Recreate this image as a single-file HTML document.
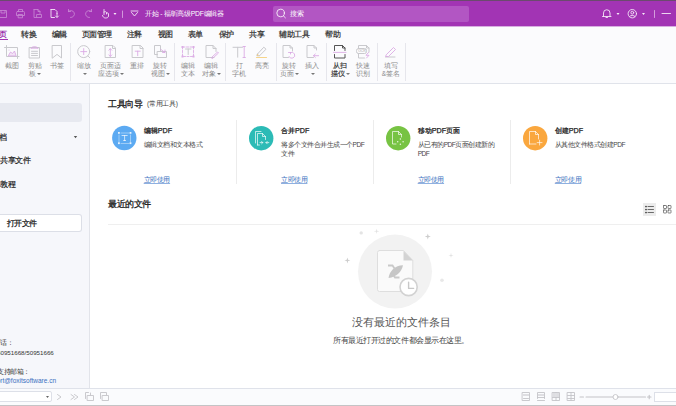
<!DOCTYPE html>
<html><head><meta charset="utf-8">
<style>
*{margin:0;padding:0;box-sizing:border-box}
html,body{width:676px;height:406px;overflow:hidden;background:#fff;font-family:"Liberation Sans",sans-serif;color:#333}
.a{position:absolute;white-space:nowrap}
#title{position:absolute;left:0;top:0;width:676px;height:26px;background:#a234b4}
#title2{position:absolute;left:0;top:26px;width:676px;height:1px;background:#d7aee0}
#topline{position:absolute;left:0;top:0;width:676px;height:1px;background:#6b4a6e}
#tabs{position:absolute;left:0;top:27px;width:676px;height:56px;background:#fbfbfd}
#ribline{position:absolute;left:0;top:83px;width:676px;height:1px;background:#e0e3ea}
#side{position:absolute;left:0;top:84px;width:90px;height:304px;background:#f6f7fb;border-right:1px solid #e2e4ea}
#status{position:absolute;left:0;top:388px;width:676px;height:18px;background:#fafbfd;border-top:1px solid #dfe2ea}
#botline{position:absolute;left:0;top:405px;width:676px;height:1px;background:#c4c4c6}
.tab{position:absolute;top:29.5px;font-size:7.6px;letter-spacing:-0.5px;line-height:9px;color:#444;font-weight:bold}
.lbl{position:absolute;font-size:6.6px;line-height:8.2px;color:#8a8a8a;text-align:center;white-space:nowrap}
.sep{position:absolute;top:43px;width:1px;height:38px;background:#e6e6ec}
.dd{display:inline-block;width:0;height:0;border-left:2px solid transparent;border-right:2px solid transparent;border-top:2px solid #777;vertical-align:middle;margin-left:1px;margin-bottom:1px}
svg{position:absolute;left:0;top:0}
</style></head><body>
<div id="title"></div>
<div id="title2"></div>
<div id="topline"></div>
<div id="tabs"></div>
<div id="ribline"></div>
<div id="side"></div>
<div id="status"></div>
<div id="botline"></div>

<!-- title text -->
<div class="a" style="left:273px;top:5.5px;width:196px;height:16.5px;background:#b256c3;border-radius:2px"></div>
<div class="a" style="left:145px;top:8.5px;font-size:6.8px;letter-spacing:-0.25px;line-height:9px;color:#fff">开始 - 福昕高级PDF编辑器</div>
<div class="a" style="left:290px;top:8.5px;font-size:7px;line-height:9px;color:#fff">搜索</div>

<!-- tabs -->
<div class="tab" style="left:-1px;color:#9a2fad">页</div>
<div class="a" style="left:0;top:38.6px;width:7.5px;height:1.2px;background:#a234b4"></div>
<div class="tab" style="left:21px">转换</div>
<div class="tab" style="left:51.5px">编辑</div>
<div class="tab" style="left:81.5px">页面管理</div>
<div class="tab" style="left:126.5px">注释</div>
<div class="tab" style="left:157.5px">视图</div>
<div class="tab" style="left:187.5px">表单</div>
<div class="tab" style="left:218.5px">保护</div>
<div class="tab" style="left:249px">共享</div>
<div class="tab" style="left:279px">辅助工具</div>
<div class="tab" style="left:325px">帮助</div>

<!-- ribbon separators -->
<div class="sep" style="left:70px"></div>
<div class="sep" style="left:174px"></div>
<div class="sep" style="left:225px"></div>
<div class="sep" style="left:276px"></div>
<div class="sep" style="left:326px"></div>
<div class="sep" style="left:377px"></div>
<div class="sep" style="left:405px"></div>

<!-- ribbon labels -->
<div class="lbl" style="left:-8px;top:62px;width:40px">截图</div>
<div class="lbl" style="left:14.5px;top:62px;width:40px">剪贴<br>板<span class="dd"></span></div>
<div class="lbl" style="left:37px;top:62px;width:40px">书签</div>
<div class="lbl" style="left:64px;top:62px;width:40px">缩放<br><span class="dd"></span></div>
<div class="lbl" style="left:90.5px;top:62px;width:40px">页面适<br>应选项<span class="dd"></span></div>
<div class="lbl" style="left:117px;top:62px;width:40px">重排</div>
<div class="lbl" style="left:140px;top:62px;width:40px">旋转<br>视图<span class="dd"></span></div>
<div class="lbl" style="left:168px;top:62px;width:40px">编辑<br>文本</div>
<div class="lbl" style="left:191px;top:62px;width:40px">编辑<br>对象<span class="dd"></span></div>
<div class="lbl" style="left:219px;top:62px;width:40px">打<br>字机</div>
<div class="lbl" style="left:242px;top:62px;width:40px">高亮</div>
<div class="lbl" style="left:269px;top:62px;width:40px">旋转<br>页面<span class="dd"></span></div>
<div class="lbl" style="left:292px;top:62px;width:40px">插入<br><span class="dd"></span></div>
<div class="lbl" style="left:320px;top:62px;width:40px;color:#2a2a2a;-webkit-text-stroke:0.15px #2a2a2a">从扫<br>描仪<span class="dd"></span></div>
<div class="lbl" style="left:343px;top:62px;width:40px">快速<br>识别</div>
<div class="lbl" style="left:371px;top:62px;width:40px">填写<br>&amp;签名</div>

<!-- sidebar -->
<div class="a" style="left:0;top:103px;width:82px;height:19px;background:#e7e9f0;border-radius:0 3px 3px 0"></div>
<div class="a" style="left:-1px;top:132.5px;font-size:7.6px;line-height:9px;color:#222;-webkit-text-stroke:0.2px #222">档</div>

<div class="a" style="left:0;top:155.5px;font-size:7.6px;letter-spacing:-0.5px;line-height:9px;color:#222;-webkit-text-stroke:0.2px #222">共享文件</div>
<div class="a" style="left:0;top:179.5px;font-size:7.6px;letter-spacing:-0.5px;line-height:9px;color:#222;-webkit-text-stroke:0.2px #222">教程</div>
<div class="a" style="left:0;top:214px;width:82px;height:18px;background:#fff;border:1px solid #dcdfe7;border-left:none;border-radius:0 3px 3px 0"></div>
<div class="a" style="left:6.5px;top:218.5px;font-size:7.6px;letter-spacing:-0.4px;line-height:9px;color:#222;-webkit-text-stroke:0.25px #222">打开文件</div>
<div class="a" style="left:0;top:338px;font-size:6.6px;letter-spacing:-0.5px;line-height:9px;color:#333">话：</div>
<div class="a" style="left:-3px;top:347.5px;font-size:6.2px;line-height:9px;color:#333">50951668/50951666</div>
<div class="a" style="left:-3px;top:366.5px;font-size:6.6px;letter-spacing:-0.5px;line-height:9px;color:#333">支持邮箱：</div>
<div class="a" style="right:620px;top:375.5px;font-size:6.5px;line-height:9px;color:#3a6fc0">support@foxitsoftware.cn</div>

<!-- content -->
<div class="a" style="left:108px;top:98.5px;font-size:8.6px;letter-spacing:-0.3px;line-height:11px;color:#222;-webkit-text-stroke:0.3px #222">工具向导</div>
<div class="a" style="left:147px;top:100px;font-size:6.6px;letter-spacing:-0.3px;line-height:8px;color:#444">(常用工具)</div>

<div class="a" style="left:143.7px;top:126px;font-size:7.2px;line-height:9px;color:#222;-webkit-text-stroke:0.25px #222">编辑PDF</div>
<div class="a" style="left:143.7px;top:139.5px;font-size:6.6px;letter-spacing:-0.5px;line-height:9.5px;color:#474747">编辑文档和文本格式</div>
<div class="a" style="left:143.7px;top:174.5px;font-size:6.5px;letter-spacing:-0.4px;line-height:9px;color:#3a6fc0;text-decoration:underline;text-decoration-color:#8fb0e0">立即使用</div>

<div class="a" style="left:281px;top:126px;font-size:7.2px;line-height:9px;color:#222;-webkit-text-stroke:0.25px #222">合并PDF</div>
<div class="a" style="left:281px;top:139.5px;font-size:6.6px;letter-spacing:-0.5px;line-height:9.5px;color:#474747">将多个文件合并生成一个PDF<br>文件</div>
<div class="a" style="left:281px;top:174.5px;font-size:6.5px;letter-spacing:-0.4px;line-height:9px;color:#3a6fc0;text-decoration:underline;text-decoration-color:#8fb0e0">立即使用</div>

<div class="a" style="left:417.7px;top:126px;font-size:7.2px;line-height:9px;color:#222;-webkit-text-stroke:0.25px #222">移动PDF页面</div>
<div class="a" style="left:417.7px;top:139.5px;font-size:6.6px;letter-spacing:-0.5px;line-height:9.5px;color:#474747">从已有的PDF页面创建新的<br>PDF</div>
<div class="a" style="left:417.7px;top:174.5px;font-size:6.5px;letter-spacing:-0.4px;line-height:9px;color:#3a6fc0;text-decoration:underline;text-decoration-color:#8fb0e0">立即使用</div>

<div class="a" style="left:554.8px;top:126px;font-size:7.2px;line-height:9px;color:#222;-webkit-text-stroke:0.25px #222">创建PDF</div>
<div class="a" style="left:554.8px;top:139.5px;font-size:6.6px;letter-spacing:-0.5px;line-height:9.5px;color:#474747">从其他文件格式创建PDF</div>
<div class="a" style="left:554.8px;top:174.5px;font-size:6.5px;letter-spacing:-0.4px;line-height:9px;color:#3a6fc0;text-decoration:underline;text-decoration-color:#8fb0e0">立即使用</div>

<div class="a" style="left:236px;top:120px;width:1px;height:64px;background:#ececec"></div>
<div class="a" style="left:373px;top:120px;width:1px;height:64px;background:#ececec"></div>
<div class="a" style="left:510px;top:120px;width:1px;height:64px;background:#ececec"></div>

<div class="a" style="left:108px;top:198.5px;font-size:8.6px;letter-spacing:-0.4px;line-height:11px;color:#222;-webkit-text-stroke:0.3px #222">最近的文件</div>
<div class="a" style="left:108px;top:224px;width:568px;height:1px;background:#efefef"></div>
<div class="a" style="left:643px;top:203px;width:13px;height:13px;background:#ececec"></div>

<div class="a" style="left:351.5px;top:315px;font-size:10.6px;line-height:14px;color:#555">没有最近的文件条目</div>
<div class="a" style="left:333px;top:335.5px;font-size:7.6px;letter-spacing:-0.45px;line-height:9px;color:#444">所有最近打开过的文件都会显示在这里。</div>

<!-- status bar input boxes -->
<div class="a" style="left:-2px;top:391px;width:54px;height:11px;background:#fff;border:1px solid #dde0e8;border-radius:2px"></div>
<div class="a" style="left:654px;top:391.5px;width:30px;height:10.5px;background:#fff;border:1px solid #dde0e8"></div>

<svg width="676" height="406" viewBox="0 0 676 406" fill="none" stroke-linecap="round" stroke-linejoin="round">
 <!-- title bar icons -->
 <g stroke="#c886d3" stroke-width="0.85">
  <path d="M-2 10.5H6.5V17.5H-2M1 10.5V13H5V10.5"/>
  <path d="M18.5 11.5V9.5H22.5V11.5M17.5 11.5H23.5Q24.5 11.5 24.5 12.5V15.5H16.5V12.5Q16.5 11.5 17.5 11.5ZM18.5 14.5H22.5V17.8H18.5Z"/>
  <path d="M34 9.5H38L40 11.5V13.5M34 9.5V17.5H36.5M37 14.5H41.5V17.5H37ZM38 9.5V11.5H40"/>
  <path d="M68.5 11.5A3.5 3.5 0 1 1 70.5 17.5M68.5 11.5V9.5M68.5 11.5H70.5"/>
  <path d="M91.5 11.5A3.5 3.5 0 1 0 89.5 17.5M91.5 11.5V9.5M91.5 11.5H89.5"/>
  <path d="M122.5 11V17.5" stroke="#d9a9e1"/>
 </g>
 <g stroke="#f3e6f6" stroke-width="0.9">
  <path d="M51 9.5H55L57 11.5V13.5M51 9.5V17.5H54.5M57 13.5V17M55.5 16L57 17.5L58.5 16"/>
  <path d="M104 9.5V14.5M104 12C105 11.5 106 11.5 106.5 12.5V14M106.5 13C107.5 12.5 108.5 13 108.5 14V16C108.5 17.5 107 18 105.5 18C104 18 103 17 102.5 15.5"/>
  <path d="M131 11H138M131.5 12.5L134.5 16L137.5 12.5"/>
  <path d="M602.5 16.5H611M603.5 16.5V13A3 3 0 0 1 610 13V16.5M606 17.5H607.5"/>
  <circle cx="632.3" cy="13.7" r="4.2"/>
  <circle cx="632.3" cy="12.7" r="1.4"/>
  <path d="M629.5 16.5C630.5 15 634 15 635 16.5"/>
  <path d="M654.5 10.5V17.5" stroke="#d9a9e1"/>
  <path d="M662 13.5H670.5"/>
 </g>
 <g fill="rgba(255,255,255,0.9)" stroke="none">
  <path d="M113.5 13H116.5L115 15Z"/>
  <path d="M616.5 13H619.5L618 15Z"/>
  <path d="M642 13H645L643.5 15Z"/>
 </g>
 <!-- search icon -->
 <g stroke="rgba(255,255,255,0.9)" stroke-width="0.9">
  <circle cx="280.6" cy="13" r="3.8"/><path d="M283.4 15.8L285.4 17.8"/>
 </g>

 <!-- ribbon icons gray -->
 <g stroke="#c9c9cd" stroke-width="1">
  <path d="M6.5 45.5V56.5H19M4.5 47.5H17.5V58.5"/>
  <path d="M29.5 47.5H39.5V58H29.5Z"/>
  <path d="M31.5 51.3H37.5M31.5 53.4H37.5M31.5 55.5H37.5"/>
  <path d="M52.5 45.5H61.5V58L57 54.4L52.5 58Z"/>
  <circle cx="83.7" cy="51.6" r="6"/><path d="M88 56L89.8 57.8"/>
  <path d="M105.5 45.5H113L115.5 48V57.5H105.5ZM112.5 45.5V48.5H115.5"/>
  <path d="M132.5 45.5H140.5L143 48V57.5H132.5ZM140 45.5V48.5H143"/>
  <path d="M160.5 51V45.5H154.5V54.5H157.5M157.5 51.5H166.5V57.5H157.5Z"/>
  <path d="M185.5 49H191M188.2 49V54.5"/>
  <path d="M214 57.5H206V45.5H213L216 48.5V51.5M213 45.5V48.5H216"/>
  <path d="M233 47.3H242.5M237.7 47.3V57.2"/>
  <path d="M257.5 54L263.8 47.2L266 49.2L259.5 55.8M257.5 54L256.8 55.8L259.5 55.8"/>
  <path d="M292.5 51V48L290 45.5H283V57.5H288.5M290 45.5V48H292.5"/>
  <path d="M316.5 50V48L314 45.5H307V57.5H313.5M314 45.5V48H316.5"/>
  <path d="M369 52V48L366.5 45.5H358.5V48M358.5 53.5V58H364.5M366.5 45.5V48H369"/><rect x="356.5" y="48.5" width="10" height="5" rx="2"/>
  <path d="M385.5 57H395"/>
 </g>
 <g stroke="#555" stroke-width="1">
  <path d="M334.5 50.5V45.5H342.5L345 48V50.5M334.5 54.5V58H345V54.5M342.5 45.5V48H345"/>
 </g>
 <g stroke="#d9a6e3" stroke-width="0.85">
  <path d="M8.5 55.5L10.5 52L12.5 53.5L14.5 51L16 55.5Z" fill="#f3e4f6"/><circle cx="9" cy="50" r="0.5" fill="#dcaee5" stroke="none"/>
  <path d="M31 48.2H38M31.5 48C32 46 37 46 37.5 48"/>
  <path d="M80.7 51.6H86.7M83.7 48.6V54.6"/>
  <path d="M110.3 48.7V56.4M108.8 50.2L110.3 48.7L111.8 50.2M108.8 54.9L110.3 56.4L111.8 54.9"/>
  <path d="M135.2 51.2H140.2M137.7 51.2V55.7"/>
  <path d="M161 49.5L165 52.5M165 50V52.5H162.5"/>
  <path d="M182.5 47V56.5H193.5V47Z" stroke-dasharray="2 1.5"/>
  <path d="M211.5 57.5L217.5 52L218.5 53L212.5 58.5Z"/>
  <path d="M244.2 46.5V57.5M243 46.5H245.4M243 57.5H245.4"/>
  <path d="M290.5 52.5A3 3 0 1 1 289 56.5M290.5 52.5H288.5M290.5 52.5V54"/>
  <path d="M318.6 55.7H313.5M315.3 54L313.5 55.7L315.3 57.4"/>
  <path d="M333.5 52.4H346"/>
  <path d="M368.5 52.5L366 55.3H369L366.5 58"/>
  <path d="M386.5 54.5L393.5 47.5L395.5 49.5L388.5 56.5L386 56.5Z"/>
 </g>
 <path d="M256.5 57.5H266.5" stroke="#f6d48a" stroke-width="1.2"/><path d="M256.8 55.8L257.6 54L259 55.2Z" fill="#f2c46a"/>
 <g fill="#dcaee5" stroke="none">
  <rect x="181.5" y="46" width="2" height="2"/><rect x="192.5" y="46" width="2" height="2"/>
  <rect x="181.5" y="55.5" width="2" height="2"/><rect x="192.5" y="55.5" width="2" height="2"/>
 </g>
 <text x="358.2" y="52.4" font-size="3.4" fill="#a8a8a8" font-family="Liberation Sans">OCR</text>
 <!-- card circles -->
 <circle cx="124.3" cy="138" r="12.2" fill="#5caaf2"/>
 <circle cx="261.2" cy="138.2" r="12.2" fill="#2cbbb6"/>
 <circle cx="398.2" cy="138.2" r="12.2" fill="#77c343"/>
 <circle cx="535.2" cy="138.2" r="12.2" fill="#faa73e"/>
 <g stroke="rgba(255,255,255,0.85)" stroke-width="0.8">
  <path d="M119 135V142M130.5 135V142M121 133H129M121 143.5H129" stroke="rgba(255,255,255,0.5)"/>
  <path d="M122 135.5H127.2M124.6 135.5V140.5M123.6 140.5H125.6"/>
  <path d="M255.5 143V131.5H261M257.5 145V133.5H262.5L265.5 136.5V139.5M257.5 145H259.5M262.5 133.5V136.5H265.5M260 142.6H262.8M261.6 141.4L262.8 142.6L261.6 143.8M268.8 142.6H266M267.2 141.4L266 142.6L267.2 143.8"/>
  <path d="M396 144H392.5V131.5H398.5L401.5 134.5V137M398.5 131.5V134.5H401.5"/>
  <path d="M529.5 144V131.5H535.5L538.5 134.5V139M529.5 144H536M535.5 131.5V134.5H538.5M539.6 140.2V145M537.2 142.6H542"/>
 </g>
 <g fill="rgba(255,255,255,0.85)">
  <rect x="118" y="132" width="1.8" height="1.8"/><rect x="129.6" y="132" width="1.8" height="1.8"/>
  <rect x="118" y="142.3" width="1.8" height="1.8"/><rect x="129.6" y="142.3" width="1.8" height="1.8"/>
  <circle cx="400.4" cy="139.1" r="0.75"/><circle cx="403.1" cy="141.7" r="0.75"/><circle cx="400.4" cy="144.3" r="0.75"/><circle cx="397.7" cy="141.7" r="0.75"/>
 </g>
 <!-- empty illustration -->
 <circle cx="395" cy="271.6" r="37" fill="#f2f2f2"/>
 <path d="M379.5 250.5H403.5L412.8 260.5V289.5A2 2 0 0 1 410.8 291.5H379.5A2 2 0 0 1 377.5 289.5V252.5A2 2 0 0 1 379.5 250.5Z" fill="#fafafa" stroke="#dedede" stroke-width="1"/>
 <path d="M403.5 251V260.6H413Z" fill="#d3d3d3"/>
 <path d="M388 265.5H392.5L394.5 268.5M399.5 277.5H395L393 274.5" stroke="#c9c9c9" stroke-width="1.8" stroke-linecap="butt" stroke-linejoin="miter"/>
 <path d="M388.5 278C389.5 271 395 265.5 403 265.3C401.5 272 396.5 277 388.5 278Z" fill="#c6c6c6"/>
 <circle cx="408.6" cy="287" r="8.6" fill="#fff" stroke="#d2d2d2" stroke-width="1.6"/>
 <path d="M408.6 282.3V288.4H413.6" stroke="#c8c8c8" stroke-width="1.4"/>
 <g>
  <path d="M376.6 228.5L377.1 230.8L379.40000000000003 231.3L377.1 231.8L376.6 234.10000000000002L376.1 231.8L373.8 231.3L376.1 230.8Z" fill="#e2e2e2"/>
  <path d="M427.8 233.5L428.5 235.8L430.8 236.5L428.5 237.2L427.8 239.5L427.1 237.2L424.8 236.5L427.1 235.8Z" fill="#cdcdcd"/>
  <path d="M347.4 257.4L348.09999999999997 259.7L350.4 260.4L348.09999999999997 261.09999999999997L347.4 263.4L346.7 261.09999999999997L344.4 260.4L346.7 259.7Z" fill="#cdcdcd"/>
  <path d="M451 252.8L451.5 254.9L453.6 255.4L451.5 255.9L451 258.0L450.5 255.9L448.4 255.4L450.5 254.9Z" fill="#e2e2e2"/>
  <circle cx="361.2" cy="232.9" r="1.7" fill="#e4e4e4"/>
  <circle cx="442" cy="280.3" r="1.8" fill="#e8e8e8"/>
 </g>
 <!-- view toggles -->
 <g stroke="#4a4a4a" stroke-width="0.8">
  <path d="M648 206.5H653.5M648 209.5H653.5M648 212.5H653.5"/>
 </g>
 <g stroke="#555" stroke-width="0.7">
  <rect x="663.5" y="205.5" width="3" height="3" rx="0.4"/><rect x="668" y="205.5" width="3" height="3" rx="0.4"/>
  <rect x="663.5" y="210" width="3" height="3" rx="0.4"/><rect x="668" y="210" width="3" height="3" rx="0.4"/>
 </g>
 <g fill="#333"><circle cx="646" cy="206.5" r="0.85"/><circle cx="646" cy="209.5" r="0.85"/><circle cx="646" cy="212.5" r="0.85"/></g>
 <path d="M73.8 136H77.2L75.5 138.2Z" fill="#555"/>
 <!-- status bar -->
 <path d="M46 396H49L47.5 398Z" fill="#666"/>
 <g stroke="#c4c4c8" stroke-width="0.9">
  <path d="M57.5 394.5L61 397L57.5 399.5M71 394.5L74.5 397L71 399.5M74.5 394.5L78 397L74.5 399.5"/>
  <path d="M85.5 398.5V392.5H88.5M87.5 395.5H93.5V400.5H87.5ZM90.5 395V393"/>
  <path d="M100.5 398.5V392.5H106.5V395M102.5 395.5H108.5V400.5H102.5Z"/>
  <path d="M522.5 392.5H529.5V400.5H522.5ZM523.5 398.5H528.5"/>
  <path d="M537.5 398.5V392.5H544.5V398.5M537.5 400.5H544.5M537.5 397.5H544.5"/>
  <path d="M552.5 392.5H559.5V400.5H552.5ZM556 392.5V400.5M552.5 397.5H559.5"/>
  <path d="M567.5 392.5H574.5V400.5H567.5ZM571 392.5V400.5M567.5 395.5H574.5M567.5 398.5H574.5"/>
 </g>
 <g fill="#dedee2" stroke="none">
  <rect x="523" y="394" width="6" height="2"/><rect x="538" y="394" width="6" height="2"/>
  <rect x="553" y="393" width="2.5" height="4"/><rect x="556.5" y="393" width="2.5" height="4"/>
 </g>
 <g stroke="#c4c4c8" stroke-width="0.9">
  <path d="M580 397H583.5M586 397H645.5M647.5 397H651M649.2 395.2V398.8" stroke-width="1.1"/>
 </g>
 <circle cx="615.5" cy="397" r="2.5" fill="#fff" stroke="#c4c4c8" stroke-width="0.9"/>
</svg>
</body></html>
